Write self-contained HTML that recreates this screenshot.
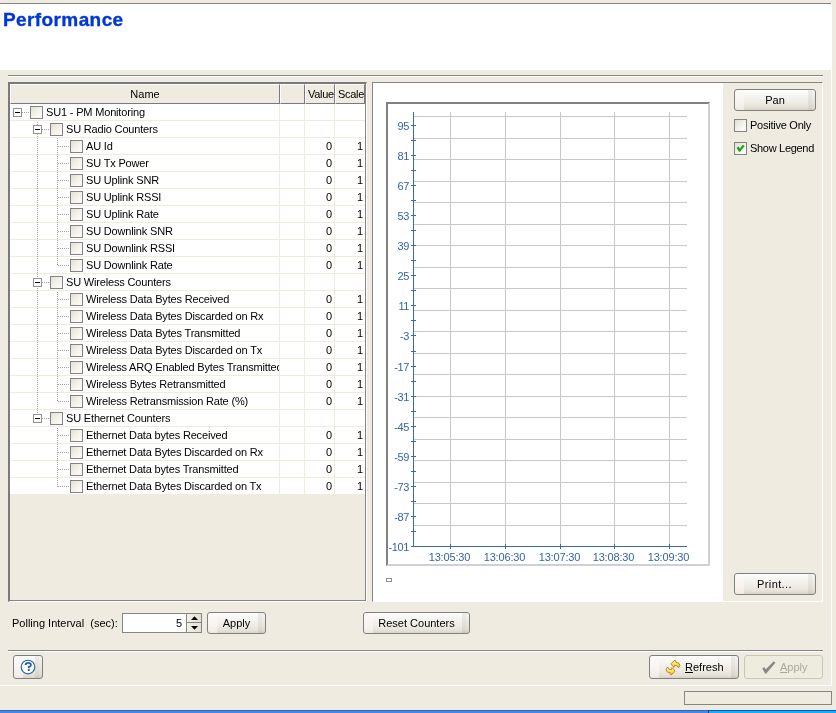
<!DOCTYPE html><html><head><meta charset="utf-8"><style>
*{margin:0;padding:0;box-sizing:border-box}
html,body{width:836px;height:713px;overflow:hidden;background:#EFEBE0;font:11px "Liberation Sans",sans-serif;color:#000;position:relative}
.a{position:absolute}
.t{position:absolute;white-space:nowrap;line-height:13px;will-change:transform}
.hl{position:absolute;height:1px}
.vl{position:absolute;width:1px}
.btn{position:absolute;border:1px solid #808080;border-radius:3px;
 background:linear-gradient(to right,rgba(0,0,0,0) 0,rgba(0,0,0,0) calc(100% - 7px),rgba(90,75,50,.085) calc(100% - 7px),rgba(90,75,50,.085) calc(100% - 3px),rgba(90,75,50,.05) calc(100% - 3px)),linear-gradient(to right,rgba(255,248,246,.55) 0,rgba(255,248,246,.55) 9px,rgba(255,255,255,0) 9px),linear-gradient(#ffffff 0%,#fbfaf8 8%,#f5f3ef 35%,#eeebe4 65%,#e5e1d6 88%,#d8d3c6 100%);}
.btn span{will-change:transform;position:absolute;left:0;right:0;text-align:center;white-space:nowrap;line-height:13px}
.cb{position:absolute;width:13px;height:13px;border:1px solid #838383;background:linear-gradient(135deg,#e3e0d4 0%,#f3f1e9 50%,#fffdfa 100%)}
.cbw{background:linear-gradient(135deg,#e2dfd3 0%,#f4f2ea 55%,#ffffff 100%)}
.dh{position:absolute;height:1px;background:repeating-linear-gradient(to right,#a0a0a0 0 1px,transparent 1px 2px)}
.dv{position:absolute;width:1px;background:repeating-linear-gradient(to bottom,#a0a0a0 0 1px,transparent 1px 2px)}
.exp{position:absolute;width:9px;height:9px;border:1px solid #919191;background:#fff}
.exp:after{content:"";position:absolute;left:1px;top:3px;width:5px;height:1px;background:#000}
.yl{will-change:transform;position:absolute;color:#3564a6;white-space:nowrap;line-height:11px;font-size:11px}
</style></head><body>
<div class="a" style="left:0;top:3px;width:831px;height:1px;background:#858585"></div>
<div class="a" style="left:0;top:4px;width:832px;height:66px;background:#fff"></div>
<div class="t" style="left:3px;top:9px;font-weight:bold;font-size:19px;line-height:22px;color:#0038d4;letter-spacing:0.4px;-webkit-text-stroke:0.35px #0038d4">Performance</div>
<div class="vl" style="left:831px;top:4px;height:682px;background:#fff"></div>
<div class="hl" style="left:0;top:685px;width:832px;background:#fff"></div>
<div class="hl" style="left:8px;top:75px;width:815px;background:#858585"></div>
<div class="hl" style="left:8px;top:76px;width:815px;background:#fff"></div>
<div class="a" style="left:8px;top:82px;width:359px;height:520px;background:#EFEBE0;border-top:2px solid #7a7a7e;border-left:2px solid #7a7a7e;border-right:1px solid #fff;border-bottom:1px solid #fff"></div>
<div class="a" style="left:365px;top:84px;width:1px;height:517px;background:#858585"></div>
<div class="a" style="left:10px;top:600px;width:356px;height:1px;background:#858585"></div>
<div class="a" style="left:10px;top:84px;width:270px;height:20px;background:#EFEBE0;border-top:1px solid #fff;border-left:1px solid #fff;border-right:1px solid #7a7a7e;border-bottom:1px solid #7a7a7e"></div>
<div class="t" style="left:10px;width:270px;text-align:center;top:88px">Name</div>
<div class="a" style="left:280px;top:84px;width:25px;height:20px;background:#EFEBE0;border-top:1px solid #fff;border-left:1px solid #fff;border-right:1px solid #7a7a7e;border-bottom:1px solid #7a7a7e"></div>
<div class="a" style="left:305px;top:84px;width:30px;height:20px;background:#EFEBE0;border-top:1px solid #fff;border-left:1px solid #fff;border-right:1px solid #7a7a7e;border-bottom:1px solid #7a7a7e"></div>
<div class="t" style="left:308px;top:88px;width:26px;overflow:hidden;letter-spacing:-0.3px">Value</div>
<div class="a" style="left:335px;top:84px;width:30px;height:20px;background:#EFEBE0;border-top:1px solid #fff;border-left:1px solid #fff;border-right:1px solid #7a7a7e;border-bottom:1px solid #7a7a7e"></div>
<div class="t" style="left:338px;top:88px;width:26px;overflow:hidden;letter-spacing:-0.3px">Scale</div>
<div class="a" style="left:10px;top:104px;width:355px;height:391px;background:#fff"></div>
<div class="hl" style="left:10px;top:120px;width:355px;background:#efebde"></div>
<div class="hl" style="left:10px;top:137px;width:355px;background:#efebde"></div>
<div class="hl" style="left:10px;top:154px;width:355px;background:#efebde"></div>
<div class="hl" style="left:10px;top:171px;width:355px;background:#efebde"></div>
<div class="hl" style="left:10px;top:188px;width:355px;background:#efebde"></div>
<div class="hl" style="left:10px;top:205px;width:355px;background:#efebde"></div>
<div class="hl" style="left:10px;top:222px;width:355px;background:#efebde"></div>
<div class="hl" style="left:10px;top:239px;width:355px;background:#efebde"></div>
<div class="hl" style="left:10px;top:256px;width:355px;background:#efebde"></div>
<div class="hl" style="left:10px;top:273px;width:355px;background:#efebde"></div>
<div class="hl" style="left:10px;top:290px;width:355px;background:#efebde"></div>
<div class="hl" style="left:10px;top:307px;width:355px;background:#efebde"></div>
<div class="hl" style="left:10px;top:324px;width:355px;background:#efebde"></div>
<div class="hl" style="left:10px;top:341px;width:355px;background:#efebde"></div>
<div class="hl" style="left:10px;top:358px;width:355px;background:#efebde"></div>
<div class="hl" style="left:10px;top:375px;width:355px;background:#efebde"></div>
<div class="hl" style="left:10px;top:392px;width:355px;background:#efebde"></div>
<div class="hl" style="left:10px;top:409px;width:355px;background:#efebde"></div>
<div class="hl" style="left:10px;top:426px;width:355px;background:#efebde"></div>
<div class="hl" style="left:10px;top:443px;width:355px;background:#efebde"></div>
<div class="hl" style="left:10px;top:460px;width:355px;background:#efebde"></div>
<div class="hl" style="left:10px;top:477px;width:355px;background:#efebde"></div>
<div class="hl" style="left:10px;top:494px;width:355px;background:#efebde"></div>
<div class="vl" style="left:279px;top:104px;height:391px;background:#efebde"></div>
<div class="vl" style="left:304px;top:104px;height:391px;background:#efebde"></div>
<div class="vl" style="left:334px;top:104px;height:391px;background:#efebde"></div>
<div class="dv" style="left:37px;top:122px;height:296px"></div>
<div class="dv" style="left:57px;top:138px;height:128px"></div>
<div class="dv" style="left:57px;top:292px;height:110px"></div>
<div class="dv" style="left:57px;top:428px;height:59px"></div>
<div class="dh" style="left:22px;top:112px;width:8px"></div>
<div class="exp" style="left:13px;top:108px"></div>
<div class="cb" style="left:30px;top:106px"></div>
<div class="t" style="left:46px;top:106px;width:233px;overflow:hidden;letter-spacing:-0.17px">SU1 - PM Monitoring</div>
<div class="dh" style="left:42px;top:129px;width:8px"></div>
<div class="exp" style="left:33px;top:125px"></div>
<div class="cb" style="left:50px;top:123px"></div>
<div class="t" style="left:66px;top:123px;width:213px;overflow:hidden;letter-spacing:-0.17px">SU Radio Counters</div>
<div class="dh" style="left:58px;top:146px;width:12px"></div>
<div class="cb" style="left:70px;top:140px"></div>
<div class="t" style="left:86px;top:140px;width:193px;overflow:hidden;letter-spacing:-0.17px">AU Id</div>
<div class="t" style="left:305px;width:27px;text-align:right;top:140px">0</div>
<div class="t" style="left:335px;width:28px;text-align:right;top:140px">1</div>
<div class="dh" style="left:58px;top:163px;width:12px"></div>
<div class="cb" style="left:70px;top:157px"></div>
<div class="t" style="left:86px;top:157px;width:193px;overflow:hidden;letter-spacing:-0.17px">SU Tx Power</div>
<div class="t" style="left:305px;width:27px;text-align:right;top:157px">0</div>
<div class="t" style="left:335px;width:28px;text-align:right;top:157px">1</div>
<div class="dh" style="left:58px;top:180px;width:12px"></div>
<div class="cb" style="left:70px;top:174px"></div>
<div class="t" style="left:86px;top:174px;width:193px;overflow:hidden;letter-spacing:-0.17px">SU Uplink SNR</div>
<div class="t" style="left:305px;width:27px;text-align:right;top:174px">0</div>
<div class="t" style="left:335px;width:28px;text-align:right;top:174px">1</div>
<div class="dh" style="left:58px;top:197px;width:12px"></div>
<div class="cb" style="left:70px;top:191px"></div>
<div class="t" style="left:86px;top:191px;width:193px;overflow:hidden;letter-spacing:-0.17px">SU Uplink RSSI</div>
<div class="t" style="left:305px;width:27px;text-align:right;top:191px">0</div>
<div class="t" style="left:335px;width:28px;text-align:right;top:191px">1</div>
<div class="dh" style="left:58px;top:214px;width:12px"></div>
<div class="cb" style="left:70px;top:208px"></div>
<div class="t" style="left:86px;top:208px;width:193px;overflow:hidden;letter-spacing:-0.17px">SU Uplink Rate</div>
<div class="t" style="left:305px;width:27px;text-align:right;top:208px">0</div>
<div class="t" style="left:335px;width:28px;text-align:right;top:208px">1</div>
<div class="dh" style="left:58px;top:231px;width:12px"></div>
<div class="cb" style="left:70px;top:225px"></div>
<div class="t" style="left:86px;top:225px;width:193px;overflow:hidden;letter-spacing:-0.17px">SU Downlink SNR</div>
<div class="t" style="left:305px;width:27px;text-align:right;top:225px">0</div>
<div class="t" style="left:335px;width:28px;text-align:right;top:225px">1</div>
<div class="dh" style="left:58px;top:248px;width:12px"></div>
<div class="cb" style="left:70px;top:242px"></div>
<div class="t" style="left:86px;top:242px;width:193px;overflow:hidden;letter-spacing:-0.17px">SU Downlink RSSI</div>
<div class="t" style="left:305px;width:27px;text-align:right;top:242px">0</div>
<div class="t" style="left:335px;width:28px;text-align:right;top:242px">1</div>
<div class="dh" style="left:58px;top:265px;width:12px"></div>
<div class="cb" style="left:70px;top:259px"></div>
<div class="t" style="left:86px;top:259px;width:193px;overflow:hidden;letter-spacing:-0.17px">SU Downlink Rate</div>
<div class="t" style="left:305px;width:27px;text-align:right;top:259px">0</div>
<div class="t" style="left:335px;width:28px;text-align:right;top:259px">1</div>
<div class="dh" style="left:42px;top:282px;width:8px"></div>
<div class="exp" style="left:33px;top:278px"></div>
<div class="cb" style="left:50px;top:276px"></div>
<div class="t" style="left:66px;top:276px;width:213px;overflow:hidden;letter-spacing:-0.17px">SU Wireless Counters</div>
<div class="dh" style="left:58px;top:299px;width:12px"></div>
<div class="cb" style="left:70px;top:293px"></div>
<div class="t" style="left:86px;top:293px;width:193px;overflow:hidden;letter-spacing:-0.17px">Wireless Data Bytes Received</div>
<div class="t" style="left:305px;width:27px;text-align:right;top:293px">0</div>
<div class="t" style="left:335px;width:28px;text-align:right;top:293px">1</div>
<div class="dh" style="left:58px;top:316px;width:12px"></div>
<div class="cb" style="left:70px;top:310px"></div>
<div class="t" style="left:86px;top:310px;width:193px;overflow:hidden;letter-spacing:-0.17px">Wireless Data Bytes Discarded on Rx</div>
<div class="t" style="left:305px;width:27px;text-align:right;top:310px">0</div>
<div class="t" style="left:335px;width:28px;text-align:right;top:310px">1</div>
<div class="dh" style="left:58px;top:333px;width:12px"></div>
<div class="cb" style="left:70px;top:327px"></div>
<div class="t" style="left:86px;top:327px;width:193px;overflow:hidden;letter-spacing:-0.17px">Wireless Data Bytes Transmitted</div>
<div class="t" style="left:305px;width:27px;text-align:right;top:327px">0</div>
<div class="t" style="left:335px;width:28px;text-align:right;top:327px">1</div>
<div class="dh" style="left:58px;top:350px;width:12px"></div>
<div class="cb" style="left:70px;top:344px"></div>
<div class="t" style="left:86px;top:344px;width:193px;overflow:hidden;letter-spacing:-0.17px">Wireless Data Bytes Discarded on Tx</div>
<div class="t" style="left:305px;width:27px;text-align:right;top:344px">0</div>
<div class="t" style="left:335px;width:28px;text-align:right;top:344px">1</div>
<div class="dh" style="left:58px;top:367px;width:12px"></div>
<div class="cb" style="left:70px;top:361px"></div>
<div class="t" style="left:86px;top:361px;width:193px;overflow:hidden;letter-spacing:-0.17px">Wireless ARQ Enabled Bytes Transmitted</div>
<div class="t" style="left:305px;width:27px;text-align:right;top:361px">0</div>
<div class="t" style="left:335px;width:28px;text-align:right;top:361px">1</div>
<div class="dh" style="left:58px;top:384px;width:12px"></div>
<div class="cb" style="left:70px;top:378px"></div>
<div class="t" style="left:86px;top:378px;width:193px;overflow:hidden;letter-spacing:-0.17px">Wireless Bytes Retransmitted</div>
<div class="t" style="left:305px;width:27px;text-align:right;top:378px">0</div>
<div class="t" style="left:335px;width:28px;text-align:right;top:378px">1</div>
<div class="dh" style="left:58px;top:401px;width:12px"></div>
<div class="cb" style="left:70px;top:395px"></div>
<div class="t" style="left:86px;top:395px;width:193px;overflow:hidden;letter-spacing:-0.17px">Wireless Retransmission Rate (%)</div>
<div class="t" style="left:305px;width:27px;text-align:right;top:395px">0</div>
<div class="t" style="left:335px;width:28px;text-align:right;top:395px">1</div>
<div class="dh" style="left:42px;top:418px;width:8px"></div>
<div class="exp" style="left:33px;top:414px"></div>
<div class="cb" style="left:50px;top:412px"></div>
<div class="t" style="left:66px;top:412px;width:213px;overflow:hidden;letter-spacing:-0.17px">SU Ethernet Counters</div>
<div class="dh" style="left:58px;top:435px;width:12px"></div>
<div class="cb" style="left:70px;top:429px"></div>
<div class="t" style="left:86px;top:429px;width:193px;overflow:hidden;letter-spacing:-0.17px">Ethernet Data bytes Received</div>
<div class="t" style="left:305px;width:27px;text-align:right;top:429px">0</div>
<div class="t" style="left:335px;width:28px;text-align:right;top:429px">1</div>
<div class="dh" style="left:58px;top:452px;width:12px"></div>
<div class="cb" style="left:70px;top:446px"></div>
<div class="t" style="left:86px;top:446px;width:193px;overflow:hidden;letter-spacing:-0.17px">Ethernet Data Bytes Discarded on Rx</div>
<div class="t" style="left:305px;width:27px;text-align:right;top:446px">0</div>
<div class="t" style="left:335px;width:28px;text-align:right;top:446px">1</div>
<div class="dh" style="left:58px;top:469px;width:12px"></div>
<div class="cb" style="left:70px;top:463px"></div>
<div class="t" style="left:86px;top:463px;width:193px;overflow:hidden;letter-spacing:-0.17px">Ethernet Data bytes Transmitted</div>
<div class="t" style="left:305px;width:27px;text-align:right;top:463px">0</div>
<div class="t" style="left:335px;width:28px;text-align:right;top:463px">1</div>
<div class="dh" style="left:58px;top:486px;width:12px"></div>
<div class="cb" style="left:70px;top:480px"></div>
<div class="t" style="left:86px;top:480px;width:193px;overflow:hidden;letter-spacing:-0.17px">Ethernet Data Bytes Discarded on Tx</div>
<div class="t" style="left:305px;width:27px;text-align:right;top:480px">0</div>
<div class="t" style="left:335px;width:28px;text-align:right;top:480px">1</div>
<div class="a" style="left:372px;top:82px;width:451px;height:520px;border-top:1px solid #858585;border-left:1px solid #858585;border-right:1px solid #fff;border-bottom:1px solid #fff"></div>
<div class="a" style="left:373px;top:83px;width:350px;height:518px;background:#fff"></div>
<div class="a" style="left:386px;top:102px;width:324px;height:464px;border-top:2px solid #7f827e;border-left:2px solid #7f827e;border-right:2px solid #d0d0d4;border-bottom:2px solid #d0d0d4"></div>
<svg class="a" style="left:0;top:0" width="836" height="713" shape-rendering="crispEdges"><rect x="414" y="525" width="273" height="1" fill="#c8c8c8"/><rect x="414" y="503" width="273" height="1" fill="#c8c8c8"/><rect x="414" y="482" width="273" height="1" fill="#c8c8c8"/><rect x="414" y="460" width="273" height="1" fill="#c8c8c8"/><rect x="414" y="439" width="273" height="1" fill="#c8c8c8"/><rect x="414" y="417" width="273" height="1" fill="#c8c8c8"/><rect x="414" y="396" width="273" height="1" fill="#c8c8c8"/><rect x="414" y="374" width="273" height="1" fill="#c8c8c8"/><rect x="414" y="353" width="273" height="1" fill="#c8c8c8"/><rect x="414" y="331" width="273" height="1" fill="#c8c8c8"/><rect x="414" y="310" width="273" height="1" fill="#c8c8c8"/><rect x="414" y="288" width="273" height="1" fill="#c8c8c8"/><rect x="414" y="267" width="273" height="1" fill="#c8c8c8"/><rect x="414" y="245" width="273" height="1" fill="#c8c8c8"/><rect x="414" y="224" width="273" height="1" fill="#c8c8c8"/><rect x="414" y="202" width="273" height="1" fill="#c8c8c8"/><rect x="414" y="181" width="273" height="1" fill="#c8c8c8"/><rect x="414" y="159" width="273" height="1" fill="#c8c8c8"/><rect x="414" y="138" width="273" height="1" fill="#c8c8c8"/><rect x="414" y="116" width="273" height="1" fill="#c8c8c8"/><rect x="450" y="112" width="1" height="434" fill="#c8c8c8"/><rect x="505" y="112" width="1" height="434" fill="#c8c8c8"/><rect x="560" y="112" width="1" height="434" fill="#c8c8c8"/><rect x="614" y="112" width="1" height="434" fill="#c8c8c8"/><rect x="669" y="112" width="1" height="434" fill="#c8c8c8"/><rect x="413" y="112" width="1" height="435" fill="#3a6aa8"/><rect x="413" y="546" width="274" height="1" fill="#3a6aa8"/><rect x="411" y="546" width="5" height="1" fill="#3a6aa8"/><rect x="411" y="516" width="5" height="1" fill="#3a6aa8"/><rect x="411" y="486" width="5" height="1" fill="#3a6aa8"/><rect x="411" y="456" width="5" height="1" fill="#3a6aa8"/><rect x="411" y="426" width="5" height="1" fill="#3a6aa8"/><rect x="411" y="396" width="5" height="1" fill="#3a6aa8"/><rect x="411" y="366" width="5" height="1" fill="#3a6aa8"/><rect x="411" y="335" width="5" height="1" fill="#3a6aa8"/><rect x="411" y="305" width="5" height="1" fill="#3a6aa8"/><rect x="411" y="275" width="5" height="1" fill="#3a6aa8"/><rect x="411" y="245" width="5" height="1" fill="#3a6aa8"/><rect x="411" y="215" width="5" height="1" fill="#3a6aa8"/><rect x="411" y="185" width="5" height="1" fill="#3a6aa8"/><rect x="411" y="155" width="5" height="1" fill="#3a6aa8"/><rect x="411" y="125" width="5" height="1" fill="#3a6aa8"/><rect x="411" y="531" width="5" height="1" fill="#3a6aa8"/><rect x="411" y="501" width="5" height="1" fill="#3a6aa8"/><rect x="411" y="471" width="5" height="1" fill="#3a6aa8"/><rect x="411" y="441" width="5" height="1" fill="#3a6aa8"/><rect x="411" y="411" width="5" height="1" fill="#3a6aa8"/><rect x="411" y="381" width="5" height="1" fill="#3a6aa8"/><rect x="411" y="351" width="5" height="1" fill="#3a6aa8"/><rect x="411" y="320" width="5" height="1" fill="#3a6aa8"/><rect x="411" y="290" width="5" height="1" fill="#3a6aa8"/><rect x="411" y="260" width="5" height="1" fill="#3a6aa8"/><rect x="411" y="230" width="5" height="1" fill="#3a6aa8"/><rect x="411" y="200" width="5" height="1" fill="#3a6aa8"/><rect x="411" y="170" width="5" height="1" fill="#3a6aa8"/><rect x="411" y="140" width="5" height="1" fill="#3a6aa8"/><rect x="450" y="544" width="1" height="5" fill="#3a6aa8"/><rect x="505" y="544" width="1" height="5" fill="#3a6aa8"/><rect x="560" y="544" width="1" height="5" fill="#3a6aa8"/><rect x="614" y="544" width="1" height="5" fill="#3a6aa8"/><rect x="669" y="544" width="1" height="5" fill="#3a6aa8"/><rect x="386.5" y="578.5" width="5" height="3" fill="#fff" stroke="#909090" stroke-width="1"/></svg>
<div class="yl" style="left:360px;width:49px;text-align:right;top:542px;letter-spacing:-0.4px">-101</div>
<div class="yl" style="left:360px;width:49px;text-align:right;top:512px;letter-spacing:-0.4px">-87</div>
<div class="yl" style="left:360px;width:49px;text-align:right;top:482px;letter-spacing:-0.4px">-73</div>
<div class="yl" style="left:360px;width:49px;text-align:right;top:452px;letter-spacing:-0.4px">-59</div>
<div class="yl" style="left:360px;width:49px;text-align:right;top:422px;letter-spacing:-0.4px">-45</div>
<div class="yl" style="left:360px;width:49px;text-align:right;top:392px;letter-spacing:-0.4px">-31</div>
<div class="yl" style="left:360px;width:49px;text-align:right;top:362px;letter-spacing:-0.4px">-17</div>
<div class="yl" style="left:360px;width:49px;text-align:right;top:331px;letter-spacing:-0.4px">-3</div>
<div class="yl" style="left:360px;width:49px;text-align:right;top:301px;letter-spacing:-0.4px">11</div>
<div class="yl" style="left:360px;width:49px;text-align:right;top:271px;letter-spacing:-0.4px">25</div>
<div class="yl" style="left:360px;width:49px;text-align:right;top:241px;letter-spacing:-0.4px">39</div>
<div class="yl" style="left:360px;width:49px;text-align:right;top:211px;letter-spacing:-0.4px">53</div>
<div class="yl" style="left:360px;width:49px;text-align:right;top:181px;letter-spacing:-0.4px">67</div>
<div class="yl" style="left:360px;width:49px;text-align:right;top:151px;letter-spacing:-0.4px">81</div>
<div class="yl" style="left:360px;width:49px;text-align:right;top:121px;letter-spacing:-0.4px">95</div>
<div class="yl" style="left:419px;width:61px;text-align:center;top:552px;letter-spacing:-0.15px">13:05:30</div>
<div class="yl" style="left:474px;width:61px;text-align:center;top:552px;letter-spacing:-0.15px">13:06:30</div>
<div class="yl" style="left:529px;width:61px;text-align:center;top:552px;letter-spacing:-0.15px">13:07:30</div>
<div class="yl" style="left:583px;width:61px;text-align:center;top:552px;letter-spacing:-0.15px">13:08:30</div>
<div class="yl" style="left:638px;width:61px;text-align:center;top:552px;letter-spacing:-0.15px">13:09:30</div>
<div class="btn" style="left:734px;top:89px;width:82px;height:22px"><span style="top:4px">Pan</span></div>
<div class="cb cbw" style="left:734px;top:119px"></div>
<div class="t" style="left:750px;top:119px;letter-spacing:-0.25px">Positive Only</div>
<div class="cb cbw" style="left:734px;top:142px"><svg class="a" style="left:1px;top:1px" width="11" height="11"><path d="M1.6 3.2 L3.6 6.6 L7.8 1.4" stroke="#1ea01e" stroke-width="2.3" fill="none" stroke-linejoin="round"/></svg></div>
<div class="t" style="left:750px;top:142px;letter-spacing:-0.3px">Show Legend</div>
<div class="btn" style="left:734px;top:573px;width:82px;height:22px"><span style="top:4px;letter-spacing:0.4px;left:-1px">Print...</span></div>
<div class="t" style="left:12px;top:617px;white-space:pre">Polling Interval  (sec):</div>
<div class="a" style="left:122px;top:613px;width:80px;height:20px;border:1px solid #858585;background:#fff"></div>
<div class="t" style="left:150px;width:32px;text-align:right;top:617px">5</div>
<div class="a" style="left:186px;top:614px;width:15px;height:18px;border-left:1px solid #858585;background:linear-gradient(to right,#f3f1ea,#e3dfd2)"></div>
<div class="hl" style="left:187px;top:622px;width:14px;background:#858585"></div>
<svg class="a" style="left:190px;top:615px" width="9" height="16"><path d="M1 5 L4.5 1.3 L8 5 Z" fill="#000"/><path d="M1 11 L4.5 14.7 L8 11 Z" fill="#000"/></svg>
<div class="btn" style="left:207px;top:612px;width:59px;height:22px"><span style="top:4px">Apply</span></div>
<div class="btn" style="left:363px;top:612px;width:107px;height:22px"><span style="top:4px">Reset Counters</span></div>
<div class="hl" style="left:8px;top:650px;width:815px;background:#858585"></div>
<div class="hl" style="left:8px;top:651px;width:815px;background:#fff"></div>
<div class="btn" style="left:13px;top:655px;width:30px;height:24px"><svg class="a" style="left:6px;top:3px" width="16" height="16"><circle cx="8" cy="8" r="6.8" fill="#fff" stroke="#2462a8" stroke-width="1.15"/><path d="M5.6 6 Q5.6 3.9 8.2 3.9 Q10.9 3.9 10.9 5.9 Q10.9 7.2 8.8 8 L8.8 9.3" stroke="#2462a8" stroke-width="1.9" fill="none"/><rect x="7.8" y="10.1" width="2" height="1.8" fill="#2462a8"/></svg></div>
<div class="btn" style="left:649px;top:655px;width:90px;height:24px"><span style="left:35px;right:auto;top:5px"><u>R</u>efresh</span></div>
<svg class="a" style="left:660px;top:655px" width="24" height="24" viewBox="660 655 24 24"><defs><linearGradient id="yg" x1="0" y1="0" x2="0" y2="1"><stop offset="0" stop-color="#fff6c0"/><stop offset="0.5" stop-color="#ffe070"/><stop offset="1" stop-color="#e8b030"/></linearGradient></defs><polygon points="671.1,663.6 675.0,660.0 676.0,662.3 678.8,663.1 679.9,665.3 678.5,667.9 677.1,665.9 674.7,665.3 674.0,667.4 672.2,665.6" fill="url(#yg)" stroke="#c08a10" stroke-width="1" stroke-linejoin="round"/><polygon points="674.9,671.4 671.0,675.0 670.0,672.7 667.2,671.9 666.1,669.7 667.5,667.1 668.9,669.1 671.3,669.7 672.0,667.6 673.8,669.4" fill="url(#yg)" stroke="#c08a10" stroke-width="1" stroke-linejoin="round"/></svg>
<div class="a" style="left:744px;top:655px;width:79px;height:24px;border:1px solid #c9c6b8;border-radius:3px;background:#eeebdf"><svg class="a" style="left:17px;top:5px" width="15" height="15"><polygon points="0.3,7.4 2.1,5.9 3.9,8.2 11.7,0.2 13.4,1.7 3.6,13.2" fill="#888888"/></svg><span class="t" style="left:35px;top:5px;color:#aca899"><u>A</u>pply</span></div>
<div class="a" style="left:684px;top:691px;width:148px;height:14px;border:1px solid #858585;background:#EFEBE0"></div>
<div class="a" style="left:0;top:710px;width:708px;height:3px;background:#4886e4;border-top:1px solid #2a64d6"></div>
<div class="a" style="left:708px;top:710px;width:128px;height:3px;background:#14b0f4;border-top:1px solid #0058d8;border-left:1px solid #20304a"></div>
</body></html>
